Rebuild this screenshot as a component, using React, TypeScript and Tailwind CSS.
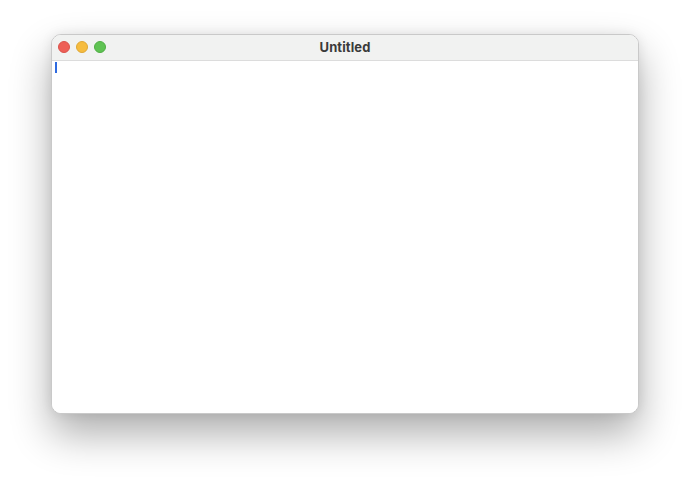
export default function App() {
  return (
    <div
      className="w-[690px] h-[482px] bg-white flex justify-center pt-[34px]"
      style={{ fontFamily: "Inter, 'Liberation Sans', sans-serif" }}
    >
      {/* Window */}
      <div className="w-[588px] h-[380px] rounded-[10px] border border-[#c9c9c9] bg-white overflow-hidden flex flex-col shadow-[0_20px_40px_rgba(0,0,0,0.32),0_0_12px_rgba(0,0,0,0.08)]">
        {/* Title bar */}
        <div className="relative h-[26px] shrink-0 bg-[#f1f2f1] border-b border-[#dcdcdc] flex items-center justify-center">
          <div className="absolute left-[6px] top-[6px] flex gap-[6px]">
            <span className="w-[12px] h-[12px] rounded-full bg-[#ee5f57] border border-[#d9534c]" />
            <span className="w-[12px] h-[12px] rounded-full bg-[#f6bc3f] border border-[#dea735]" />
            <span className="w-[12px] h-[12px] rounded-full bg-[#5fc353] border border-[#50ad44]" />
          </div>
          <span className="text-[13px] font-bold text-[#3a3a3a] tracking-[0.1px]">Untitled</span>
        </div>
        {/* Editor body */}
        <div className="flex-1 bg-white pl-[3px] pt-[1px]">
          <div className="w-[2px] h-[11px] bg-[#2f6ae0]" />
        </div>
      </div>
    </div>
  );
}
